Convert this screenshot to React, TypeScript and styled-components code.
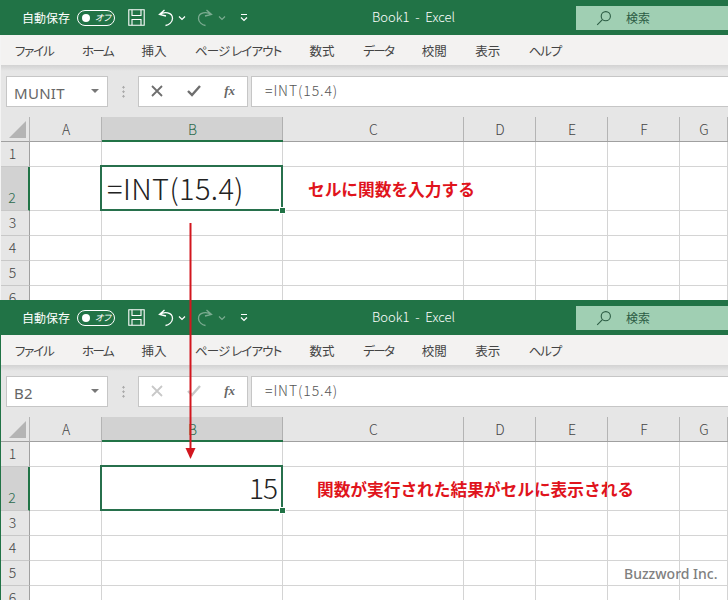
import React from "react";
import styled, { createGlobalStyle } from "styled-components";

const Global = createGlobalStyle`
  html, body { margin: 0; padding: 0; background: #fff; }
  body { font-family: "Noto Sans CJK JP", "Noto Sans", sans-serif; }
`;
const Page = styled.div`
  position: relative;
  width: 728px;
  height: 600px;
  overflow: hidden;
  font-feature-settings: "palt";
`;
const Panel = styled.section<{ $accent?: boolean }>`
  position: relative;
  height: 300px;
  overflow: hidden;
  background: #fff;
  &::before {
    content: "";
    position: absolute;
    left: 0;
    top: 35px;
    bottom: 0;
    width: 1px;
    background: ${(p) => (p.$accent ? "#217346" : "#f4f4f4")};
    z-index: 1;
  }
`;
const TitleBar = styled.header`
  display: flex;
  align-items: center;
  height: 35px;
  background: #217346;
  color: #fff;
  padding-left: 22px;
`;
const AutoSave = styled.span`
  font-size: 12px;
  width: 55px;
`;
const Toggle = styled.span`
  box-sizing: border-box;
  display: flex;
  align-items: center;
  width: 38px;
  height: 16px;
  border: 1px solid #fff;
  border-radius: 8px;
  padding-left: 4px;
  margin-right: 13px;
  gap: 5px;
`;
const Knob = styled.i`
  width: 8px;
  height: 8px;
  border-radius: 50%;
  background: #fff;
`;
const ToggleText = styled.span`
  font-size: 9px;
  line-height: 1;
  font-style: italic;
`;
const QuickIcon = styled.svg<{ $gap: number; $left?: number; $dim?: boolean }>`
  flex: none;
  margin-left: ${(p) => p.$left ?? 0}px;
  margin-right: ${(p) => p.$gap}px;
  opacity: ${(p) => (p.$dim ? 0.4 : 1)};
`;
const BookTitle = styled.span`
  position: absolute;
  left: 372px;
  top: 8px;
  font-size: 13px;
  line-height: 18px;
  font-weight: 300;
  white-space: pre;
`;
const SearchBox = styled.div`
  display: flex;
  align-items: center;
  margin-left: auto;
  width: 152px;
  height: 24px;
  background: #a0cfb3;
  color: #2c5c44;
  padding-left: 20px;
  box-sizing: border-box;
  gap: 14px;
  font-size: 12px;
`;
const Ribbon = styled.nav`
  display: flex;
  height: 30px;
  align-items: center;
  gap: 28.4px;
  padding-left: 15px;
  background: #f3f2f1;
  color: #444;
  font-size: 12.5px;
`;
const Tab = styled.span<{ $squeeze: number }>`
  white-space: pre;
  letter-spacing: ${(p) => p.$squeeze}px;
`;
const FormulaArea = styled.div`
  display: flex;
  align-items: center;
  height: 52px;
  box-sizing: border-box;
  padding: 0 0 0 6px;
  background: linear-gradient(#d2d2d2 0, #e6e6e6 6px);
`;
const FieldBox = styled.div<{ $w?: number }>`
  box-sizing: border-box;
  display: flex;
  align-items: center;
  height: 31px;
  background: #fff;
  border: 1px solid #c6c6c6;
  flex: ${(p) => (p.$w ? `0 0 ${p.$w}px` : "1")};
  border-right-width: ${(p) => (p.$w ? 1 : 0)}px;
`;
const NameBox = styled(FieldBox)`
  justify-content: space-between;
  padding: 3px 8px 0 7px;
  color: #666;
  font-family: "Noto Sans", sans-serif;
  font-size: 15px;
  letter-spacing: 0.3px;
`;
const Caret = styled.i`
  width: 0;
  height: 0;
  margin-top: -4px;
  border-left: 4px solid transparent;
  border-right: 4px solid transparent;
  border-top: 4px solid #777;
`;
const Grip = styled.div`
  flex: 0 0 30px;
  height: 13px;
  background: radial-gradient(circle at center, #aaa 1px, transparent 1.2px) center top / 3px 4.5px repeat-y;
`;
const FxButtons = styled(FieldBox)`
  justify-content: space-between;
  padding: 0 12px;
  margin-right: 3px;
`;
const FxMark = styled.span`
  font-family: "Liberation Serif", serif;
  font-style: italic;
  font-weight: bold;
  font-size: 13px;
  color: #666;
`;
const FormulaBox = styled(FieldBox)`
  padding: 0 0 2px 13px;
  color: #555;
  font-size: 14px;
  letter-spacing: 0.9px;
  font-weight: 300;
`;
const Sheet = styled.div`
  display: grid;
  grid-template-columns: 30px 72px 181px 181px 72px 72px 72px 48px;
  grid-template-rows: 25px 25px 44px 25px 25px 25px 25px;
`;
const Corner = styled.div`
  background: #e6e6e6;
  border-right: 1px solid #b4b4b4;
  border-bottom: 1px solid #a0a0a0;
  display: flex;
  align-items: flex-end;
  justify-content: flex-end;
  padding: 0 3px 3px 0;
`;
const ColHead = styled.div<{ $on?: boolean }>`
  display: flex;
  align-items: center;
  justify-content: center;
  background: ${(p) => (p.$on ? "#d2d2d2" : "#e6e6e6")};
  color: ${(p) => (p.$on ? "#2b6a4c" : "#444")};
  border-bottom: ${(p) => (p.$on ? "2px solid #217346" : "1px solid #a0a0a0")};
  box-shadow: inset -1px 0 0 ${(p) => (p.$on ? "#b0b0b0" : "#b4b4b4")};
  font-size: 14px;
  font-weight: 300;
`;
const RowHead = styled.div<{ $on?: boolean }>`
  display: flex;
  align-items: flex-end;
  justify-content: center;
  padding: 0 4px 3px 0;
  box-sizing: border-box;
  line-height: 20px;
  background: ${(p) => (p.$on ? "#d2d2d2" : "#e6e6e6")};
  color: ${(p) => (p.$on ? "#2b6a4c" : "#444")};
  border-right: ${(p) => (p.$on ? "2px solid #217346" : "1px solid #a0a0a0")};
  border-bottom: 1px solid #c8c8c8;
  font-size: 14px;
  font-weight: 300;
`;
const Cell = styled.div`
  border-right: 1px solid #d4d4d4;
  border-bottom: 1px solid #d4d4d4;
  min-width: 0;
`;
const ActiveCell = styled(Cell)<{ $right?: boolean }>`
  position: relative;
  display: flex;
  align-items: center;
  justify-content: ${(p) => (p.$right ? "flex-end" : "flex-start")};
  padding: 0 5px 4px;
  color: #222;
  font-size: ${(p) => (p.$right ? 28 : 29)}px;
  letter-spacing: ${(p) => (p.$right ? -1 : 0.4)}px;
  font-weight: 300;
  &::before {
    content: "";
    position: absolute;
    inset: -2px -1px -1px -2px;
    border: 2px solid #27704c;
  }
  &::after {
    content: "";
    position: absolute;
    right: -4px;
    bottom: -4px;
    width: 5px;
    height: 5px;
    background: #217346;
    border: 1px solid #fff;
  }
`;
const Note = styled(Cell)<{ $indent: number }>`
  display: flex;
  align-items: center;
  padding: 1px 0 0 ${(p) => p.$indent}px;
  color: #e0141c;
  font-size: 16.7px;
  font-weight: 700;
  white-space: nowrap;
  font-feature-settings: normal;
`;
const Arrow = styled.svg`
  position: absolute;
  left: 180px;
  top: 220px;
`;
const Watermark = styled.div`
  position: absolute;
  left: 624px;
  top: 564px;
  font-family: "Noto Sans", sans-serif;
  font-size: 14px;
  line-height: 20px;
  font-weight: 500;
  color: #808080;
`;

const TABS: [string, number][] = [
  ["ファイル", -1.2],
  ["ホーム", -1.5],
  ["挿入", 0],
  ["ページ レイアウト", -0.9],
  ["数式", 0],
  ["データ", -1.5],
  ["校閲", 0],
  ["表示", 0],
  ["ヘルプ", -1.2],
];
const COLS = ["A", "B", "C", "D", "E", "F", "G"];

function Quick() {
  return (
    <>
      <AutoSave>自動保存</AutoSave>
      <Toggle>
        <Knob />
        <ToggleText>オフ</ToggleText>
      </Toggle>
      <QuickIcon $gap={13} width="17" height="17" viewBox="0 0 17 17" fill="none" stroke="#fff" strokeWidth="1.1">
        <path d="M.8.8H16.2V16.2H.8Z" />
        <path d="M4 .8V6.5H13V.8M4 16.2V10.5H13V16.2" />
      </QuickIcon>
      <QuickIcon $gap={4} width="16" height="18" viewBox="0 0 16 18" fill="none" stroke="#fff" strokeWidth="1.3">
        <path d="M6.5 1 1.5 5.5 8 7M1.8 5.5C6 2.5 14.5 3 14.5 9.5 14.5 13 11 16 7.5 16.5" />
      </QuickIcon>
      <QuickIcon $gap={0} width="8" height="8" viewBox="0 0 8 8" fill="none" stroke="#fff" strokeWidth="1.2">
        <path d="M1 2.5 4 5.5 7 2.5" />
      </QuickIcon>
      <QuickIcon $gap={0} $left={11} $dim width="16" height="18" viewBox="0 0 16 18" fill="none" stroke="#fff" strokeWidth="1.3">
        <path d="M9.5 1 14.5 5.5 8 7M14.2 5.5C10 2.5 1.5 3 1.5 9.5 1.5 13 5 16 8.5 16.5" />
      </QuickIcon>
      <QuickIcon $gap={0} $left={5} $dim width="8" height="8" viewBox="0 0 8 8" fill="none" stroke="#fff" strokeWidth="1.2">
        <path d="M1 2.5 4 5.5 7 2.5" />
      </QuickIcon>
      <QuickIcon $gap={0} $left={14} width="8" height="9" viewBox="0 0 8 9" fill="none" stroke="#fff" strokeWidth="1.2">
        <path d="M1 1.5H7M1 4.5 4 7.5 7 4.5" />
      </QuickIcon>
    </>
  );
}

function ExcelPanel({ name, accent, dim, result, note, indent }: { name: string; accent?: boolean; dim?: boolean; result: string; note: string; indent: number }) {
  const strokeColor = dim ? "#c8c8c8" : "#6e6e6e";
  return (
    <Panel $accent={accent}>
      <TitleBar>
        <Quick />
        <BookTitle>{"Book1  -  Excel"}</BookTitle>
        <SearchBox>
          <svg width="16" height="16" viewBox="0 0 16 16" fill="none" stroke="#2c5c44" strokeWidth="1.1">
            <circle cx="9.8" cy="6.2" r="4.6" />
            <path d="M6.4 9.6 1.2 14.8" />
          </svg>
          検索
        </SearchBox>
      </TitleBar>
      <Ribbon>
        {TABS.map(([t, s]) => (
          <Tab key={t} $squeeze={s}>
            {t}
          </Tab>
        ))}
      </Ribbon>
      <FormulaArea>
        <NameBox $w={102}>
          {name}
          <Caret />
        </NameBox>
        <Grip />
        <FxButtons $w={110}>
          <svg width="12" height="12" viewBox="0 0 12 12" fill="none" stroke={strokeColor} strokeWidth="1.8">
            <path d="M1 1 11 11M11 1 1 11" />
          </svg>
          <svg width="14" height="12" viewBox="0 0 14 12" fill="none" stroke={strokeColor} strokeWidth="2.4">
            <path d="M1 6 5 10 13 1" />
          </svg>
          <FxMark>fx</FxMark>
        </FxButtons>
        <FormulaBox>=INT(15.4)</FormulaBox>
      </FormulaArea>
      <Sheet>
        <Corner>
          <svg width="17" height="17" viewBox="0 0 17 17">
            <path d="M17 0V17H0Z" fill="#b4b4b4" />
          </svg>
        </Corner>
        {COLS.map((c) => (
          <ColHead key={c} $on={c === "B"}>
            {c}
          </ColHead>
        ))}
        {[1, 2, 3, 4, 5, 6].map((r) => (
          <React.Fragment key={r}>
            <RowHead $on={r === 2}>{r}</RowHead>
            {[0, 1, 2, 3, 4, 5, 6].map((c) => {
              if (r === 2 && c === 1)
                return (
                  <ActiveCell key={c} $right={result === "15"}>
                    {result}
                  </ActiveCell>
                );
              if (r === 2 && c === 2)
                return (
                  <Note key={c} $indent={indent}>
                    {note}
                  </Note>
                );
              return <Cell key={c} />;
            })}
          </React.Fragment>
        ))}
      </Sheet>
    </Panel>
  );
}

export default function App() {
  return (
    <Page>
      <Global />
      <ExcelPanel name="MUNIT" result="=INT(15.4)" note="セルに関数を入力する" indent={25} />
      <ExcelPanel name="B2" accent dim result="15" note="関数が実行された結果がセルに表示される" indent={34} />
      <Arrow width="20" height="240" viewBox="0 0 20 240">
        <path d="M10.5 3V230" stroke="#d2161e" strokeWidth="2" fill="none" />
        <path d="M5.5 228H15.5L10.5 239Z" fill="#d2161e" />
      </Arrow>
      <Watermark>Buzzword Inc.</Watermark>
    </Page>
  );
}
